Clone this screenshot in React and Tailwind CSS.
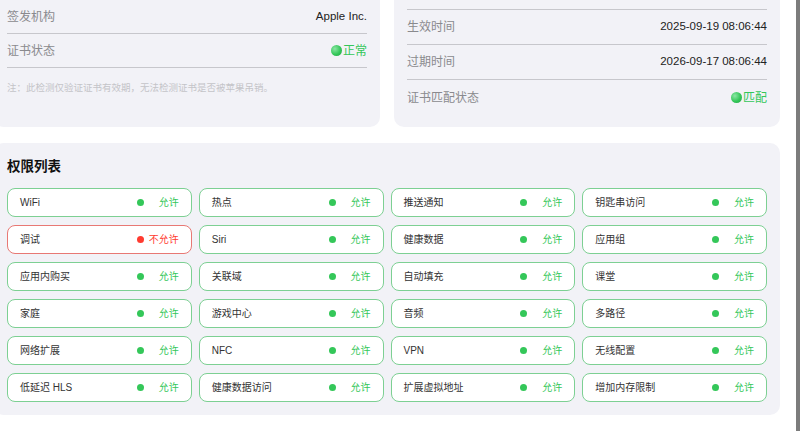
import React from "react";

const permissions = [
  { name: "WiFi", allowed: true },
  { name: "热点", allowed: true },
  { name: "推送通知", allowed: true },
  { name: "钥匙串访问", allowed: true },
  { name: "调试", allowed: false },
  { name: "Siri", allowed: true },
  { name: "健康数据", allowed: true },
  { name: "应用组", allowed: true },
  { name: "应用内购买", allowed: true },
  { name: "关联域", allowed: true },
  { name: "自动填充", allowed: true },
  { name: "课堂", allowed: true },
  { name: "家庭", allowed: true },
  { name: "游戏中心", allowed: true },
  { name: "音频", allowed: true },
  { name: "多路径", allowed: true },
  { name: "网络扩展", allowed: true },
  { name: "NFC", allowed: true },
  { name: "VPN", allowed: true },
  { name: "无线配置", allowed: true },
  { name: "低延迟 HLS", allowed: true },
  { name: "健康数据访问", allowed: true },
  { name: "扩展虚拟地址", allowed: true },
  { name: "增加内存限制", allowed: true },
];

const Ball = () => (
  <span className="inline-block w-[11px] h-[11px] rounded-full bg-[radial-gradient(circle_at_35%_35%,#8be6a4_0%,#34c759_55%,#23a446_100%)]" />
);

// rows above the visible area only show their divider
const InfoRow = ({ label, value, status, last, tall }) => (
  <div
    className={`flex items-center justify-between ${tall ? "h-[35px]" : "h-[34px]"} ${
      last ? "" : "border-b border-[#c7c7cc]"
    }`}
  >
    {label && <span className="text-[12px] text-[#8a8a8e]">{label}</span>}
    {status ? (
      <span className="flex items-center gap-[1px] text-[12px] text-[#34c759]">
        <Ball />
        {value}
      </span>
    ) : (
      value && <span className="text-[11.5px] text-[#222]">{value}</span>
    )}
  </div>
);

const PermissionChip = ({ name, allowed }) => (
  <div
    className={`flex items-center justify-between h-[29px] pl-[12px] pr-[12px] bg-white rounded-[8px] border ${
      allowed ? "border-[#7dd093]" : "border-[#e87874]"
    }`}
  >
    <span className="text-[10px] text-[#333]">{name}</span>
    <span className="flex items-center gap-[4px]">
      <span
        className={`w-[7px] h-[7px] rounded-full ${
          allowed ? "bg-[#34c759]" : "bg-[#ff3b30]"
        }`}
      />
      <span
        className={`w-[31px] text-right text-[10px] ${
          allowed ? "text-[#34c759]" : "text-[#ff3b30]"
        }`}
      >
        {allowed ? "允许" : "不允许"}
      </span>
    </span>
  </div>
);

export default function App() {
  return (
    <div
      className="flex h-[431px] w-[800px] overflow-hidden bg-white"
      style={{ fontFamily: '"Liberation Sans", "Noto Sans CJK SC", sans-serif' }}
    >
      <div className="w-[786px] -ml-[6px] shrink-0">
        <div className="grid grid-cols-2 gap-[14px] -mt-[40px]">
          <div className="bg-[#f2f2f7] rounded-[10px] px-[13px] pt-[6px]">
            <InfoRow />
            <InfoRow label="签发机构" value="Apple Inc." />
            <InfoRow label="证书状态" value="正常" status />
            <p className="mt-[13px] text-[9.5px] leading-[14px] text-[#c4c4c8]">
              注：此检测仅验证证书有效期，无法检测证书是否被苹果吊销。
            </p>
          </div>
          <div className="bg-[#f2f2f7] rounded-[10px] px-[13px] pt-[15px] pb-[12px]">
            <InfoRow tall />
            <InfoRow label="生效时间" value="2025-09-19 08:06:44" tall />
            <InfoRow label="过期时间" value="2026-09-17 08:06:44" tall />
            <InfoRow label="证书匹配状态" value="匹配" status last tall />
          </div>
        </div>

        <div className="mt-[16px] bg-[#f2f2f7] rounded-[10px] px-[13px] pt-[14px] pb-[13px]">
          <h2 className="text-[13.5px] leading-[20px] font-bold text-[#111] mb-[11px]">
            权限列表
          </h2>
          <div className="grid grid-cols-4 gap-x-[7px] gap-y-[8px]">
            {permissions.map((p) => (
              <PermissionChip key={p.name} name={p.name} allowed={p.allowed} />
            ))}
          </div>
        </div>
      </div>
      <div className="ml-auto w-[4px] h-full bg-[#7c7c7c]" />
    </div>
  );
}
